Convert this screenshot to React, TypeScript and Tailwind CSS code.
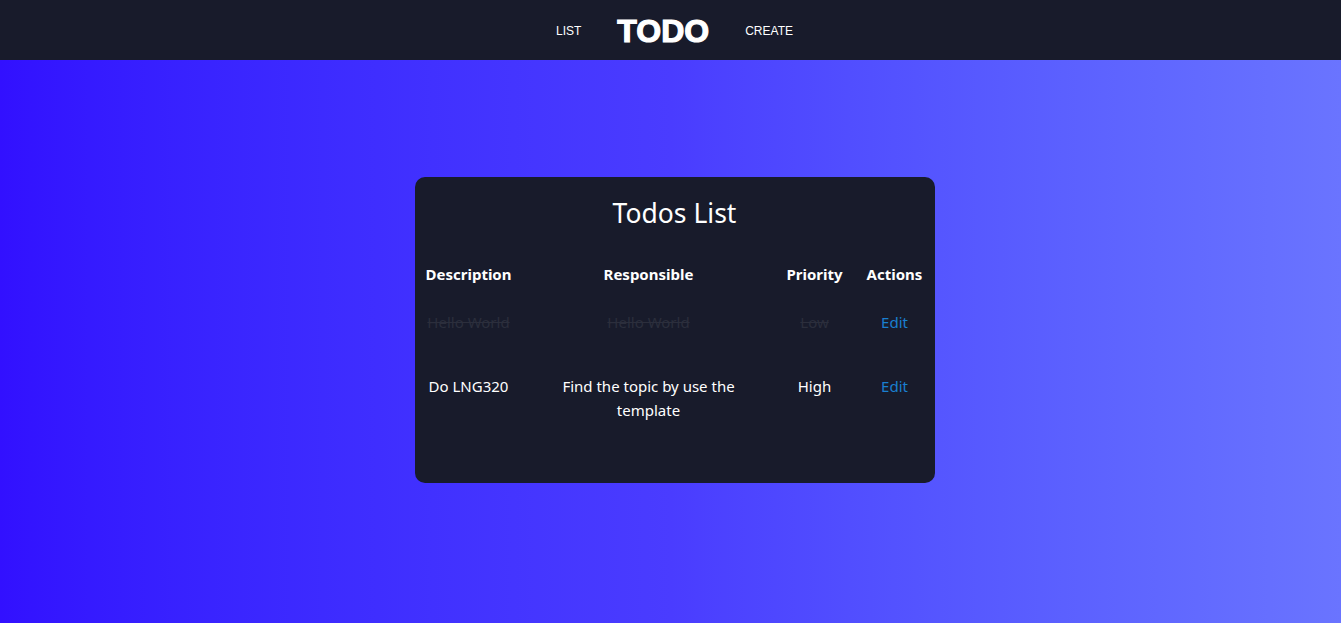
const todos = [
  { description: 'Hello World', responsible: 'Hello World', priority: 'Low', completed: true },
  { description: 'Do LNG320', responsible: 'Find the topic by use the template', priority: 'High', completed: false },
]

const done = 'text-[#2b2e3c] line-through'

export default function App() {
  return (
    <div className="flex min-h-[623px] flex-col bg-gradient-to-r from-[#3210ff] via-[#4a3cff] to-[#6a74ff] pl-[8px] font-['Noto_Sans',sans-serif]">
      <nav className="-ml-[8px] flex h-[60px] items-center justify-center gap-9 bg-[#181b2b] pl-[8px] pt-[2px] font-['Liberation_Sans',Arial,sans-serif] text-white">
        <a className="text-[12px]">LIST</a>
        <a className="text-[32px] font-black leading-none [-webkit-text-stroke:1.2px_white]">TODO</a>
        <a className="text-[12px]">CREATE</a>
      </nav>

      <main className="flex flex-1 justify-center pt-[117px]">
        <div className="h-[306px] w-[520px] rounded-[10px] bg-[#181b2b] text-white">
          <h1 className="mt-[18px] text-center text-[26.5px] leading-9">Todos List</h1>
          <table className="mt-[27px] w-full table-fixed text-center text-[15px] leading-6">
            <colgroup>
              <col className="w-[108px]" />
              <col className="w-[252px]" />
              <col className="w-[80px]" />
              <col className="w-[80px]" />
            </colgroup>
            <thead>
              <tr>
                <th className="py-1 font-bold">Description</th>
                <th className="py-1 font-bold">Responsible</th>
                <th className="py-1 font-bold">Priority</th>
                <th className="py-1 font-bold">Actions</th>
              </tr>
            </thead>
            <tbody>
              {todos.map((t) => (
                <tr key={t.description} className="align-top">
                  <td className={'py-5 ' + (t.completed ? done : '')}>{t.description}</td>
                  <td className={'px-[30px] py-5 ' + (t.completed ? done : '')}>{t.responsible}</td>
                  <td className={'py-5 ' + (t.completed ? done : '')}>{t.priority}</td>
                  <td className="py-5 text-[#1a7fd0]">Edit</td>
                </tr>
              ))}
            </tbody>
          </table>
        </div>
      </main>
    </div>
  )
}
